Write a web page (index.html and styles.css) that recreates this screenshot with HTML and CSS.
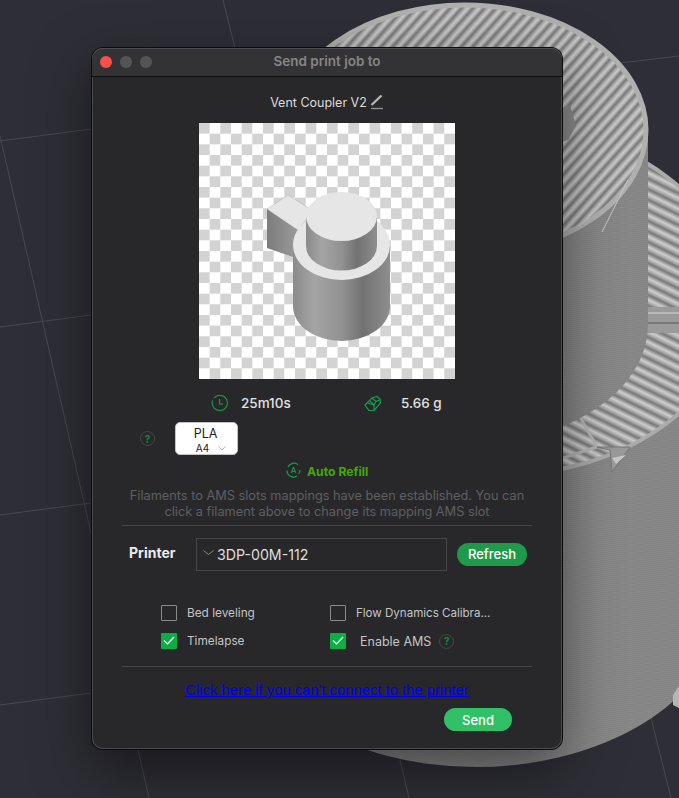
FILE: index.html
```html
<!DOCTYPE html>
<html lang="en">

<head>
  <meta charset="UTF-8" />
  <meta name="viewport" content="width=device-width, initial-scale=1.0" />
  <title>Send print job to</title>
  <link rel="stylesheet" href="styles.css">
</head>

<body>

  <!-- 3D scene behind the dialog -->
  <svg class="scene" viewBox="0 0 679 798" aria-hidden="true">
    <defs>
      <linearGradient id="ridge-a" x1="0" y1="0" x2="1" y2="0">
        <stop offset="0" stop-color="#747474" />
        <stop offset="0.25" stop-color="#a6a6a6" />
        <stop offset="0.55" stop-color="#cecece" />
        <stop offset="0.8" stop-color="#a0a0a0" />
        <stop offset="1" stop-color="#747474" />
      </linearGradient>
      <pattern id="stripes-top" width="8.5" height="8.5" patternUnits="userSpaceOnUse" patternTransform="rotate(42)">
        <rect width="8.5" height="8.5" fill="url(#ridge-a)" />
      </pattern>
      <pattern id="stripes-low" width="9.5" height="9.5" patternUnits="userSpaceOnUse" patternTransform="rotate(-64)">
        <rect width="9.5" height="9.5" fill="url(#ridge-a)" />
      </pattern>
      <pattern id="layers" width="4" height="2" patternUnits="userSpaceOnUse" patternTransform="rotate(-6)">
        <rect width="4" height="2" fill="#8a8a8a" />
        <rect width="4" height="1" fill="#838383" />
      </pattern>
    </defs>

    <g class="grid-lines">
      <line x1="0" y1="141" x2="91" y2="129" />
      <line x1="0" y1="327" x2="91" y2="315" />
      <line x1="0" y1="515" x2="91" y2="503" />
      <line x1="0" y1="705" x2="91" y2="693" />
      <line x1="0" y1="136" x2="91" y2="533" />
      <line x1="223" y1="0" x2="235" y2="48" />
      <line x1="138" y1="750" x2="149" y2="798" />
      <line x1="400" y1="760" x2="409" y2="798" />
      <line x1="649" y1="710" x2="671" y2="798" />
      <line x1="620" y1="63" x2="679" y2="56" />
    </g>

    <!-- lower body -->
    <rect x="226" y="400" width="500" height="197" fill="url(#layers)" />
    <ellipse cx="476" cy="597" rx="250" ry="170" fill="url(#layers)" />
    <!-- lower disc -->
    <ellipse cx="500" cy="300" rx="235" ry="175" fill="url(#stripes-low)" stroke="#ababab" stroke-width="4" />
    <polyline points="563,458 597,447 580,417" class="seam" />
    <polygon points="597,447 630,447 628,450 612,472 610,450" fill="#9a9a9a" stroke="#777" />
    <polygon points="612,458 626,455 616,464" fill="#c8c8c8" />
    <rect x="647" y="307" width="32" height="26" fill="#9a9a9a" />
    <rect x="647" y="312" width="32" height="2" fill="#b8b8b8" />
    <rect x="647" y="322" width="32" height="2" fill="#777" />
    <!-- upper cylinder -->
    <rect x="282" y="130" width="366" height="195" fill="url(#layers)" />
    <ellipse cx="465" cy="325" rx="183" ry="120" fill="url(#layers)" />
    <ellipse cx="465" cy="130" rx="181" ry="125" fill="url(#stripes-top)" stroke="#b0b0b0" stroke-width="5" />
    <polygon points="562,108 570,105 576,126 568,140 562,142" fill="#8d8d8d" />
    <polyline points="602,232 628,180" class="glint" />
    <polyline points="578,226 590,218" class="glint" />
    <polygon points="673,695 679,686 679,708 673,705" fill="#b5b5b5" />
  </svg>

  <!-- Dialog window -->
  <section class="window">
    <header class="titlebar">
      <div class="lights">
        <span class="light light-close"></span>
        <span class="light"></span>
        <span class="light"></span>
      </div>
      <h1>Send print job to</h1>
    </header>

    <div class="job-name">
      <span>Vent Coupler V2</span>
      <svg class="pencil" width="14" height="16" viewBox="0 0 14 16">
        <path d="M1.5 11 L11.5 1.5" stroke="#b5b5b5" stroke-width="2.4" fill="none" />
        <path d="M1 14.5 H13" stroke="#8d8d8d" stroke-width="1.4" fill="none" />
      </svg>
    </div>

    <div class="thumb">
      <svg class="model" width="256" height="256" viewBox="199 123 256 256">
        <defs>
          <linearGradient id="metal" x1="0" y1="0" x2="1" y2="0">
            <stop offset="0" stop-color="#8b8b8b" />
            <stop offset="0.22" stop-color="#a4a4a4" />
            <stop offset="0.5" stop-color="#929292" />
            <stop offset="0.72" stop-color="#727272" />
            <stop offset="1" stop-color="#8e8e8e" />
          </linearGradient>
          <linearGradient id="tab-side" x1="0" y1="0" x2="1" y2="0">
            <stop offset="0" stop-color="#7c7c7c" />
            <stop offset="1" stop-color="#9b9b9b" />
          </linearGradient>
        </defs>
        <polygon points="267,209 298,230 296,258 267,248" fill="url(#tab-side)" />
        <polygon points="267,209 288,195 310,209 306,220 298,230" fill="#e6e6e6" stroke="#a5a5a5" stroke-width="0.4" />
        <path d="M293 245 V306 A48.5 35 0 0 0 390 306 V245 Z" fill="url(#metal)" />
        <ellipse cx="341.5" cy="245" rx="48.5" ry="35" fill="#e6e6e6" />
        <path d="M306 216 V246 A35.5 24.5 0 0 0 377 246 V216 Z" fill="url(#metal)" />
        <ellipse cx="341.5" cy="216.5" rx="35.5" ry="24.5" fill="#e6e6e6" />
      </svg>
    </div>

    <div class="stats">
      <div class="stat stat-time">
        <svg width="17" height="17" viewBox="0 0 17 17" fill="none" stroke="#12a04a" stroke-width="1.1">
          <path d="M3 3 A7.6 7.6 0 1 1 1.6 5.4" />
          <path d="M8.5 4 V9 H12" />
        </svg>
        <span>25m10s</span>
      </div>
      <div class="stat stat-weight">
        <svg width="18" height="17" viewBox="0 0 18 17" fill="none" stroke="#12a04a" stroke-width="1.2">
          <path d="M1 10 L8 3 L13 1.5 L16 4 L16.5 8 L10 15.5 L5 15.5 Z" />
          <path d="M8 3 L12 6.5 L16.5 4.5 M12 6.5 L10 10 L4 8 M10 10 L10 15.5 M6 6 L10 10" />
        </svg>
        <span>5.66 g</span>
      </div>
    </div>

    <div class="filament">
      <span class="help">?</span>
      <div class="chip">
        <span class="chip-name">PLA</span>
        <div class="chip-slot">
          <span>A4</span>
          <svg width="8" height="5" viewBox="0 0 8 5" fill="none" stroke="#b8b8b8">
            <path d="M0.5 0.5 L4 4 L7.5 0.5" />
          </svg>
        </div>
      </div>
    </div>

    <div class="refill">
      <svg width="15" height="16" viewBox="0 0 15 16" fill="none" stroke="#12a04a" stroke-width="1.2">
        <path d="M2 5 A6.5 6.5 0 0 1 12 2.6 M1 8.5 A6.5 6.5 0 0 0 11 14 M14 8 A6.5 6.5 0 0 1 12.6 12" />
        <text x="7.5" y="11" text-anchor="middle" class="refill-a">A</text>
      </svg>
      <span>Auto Refill</span>
    </div>

    <p class="hint">Filaments to AMS slots mappings have been established. You can<br>click a filament above to change its mapping AMS slot</p>

    <div class="divider divider-top"></div>

    <div class="printer">
      <label>Printer</label>
      <div class="select">
        <svg width="11" height="6" viewBox="0 0 11 6" fill="none" stroke="#8a8a8a">
          <path d="M0.5 0.5 L5.5 4.5 L10.5 0.5" />
        </svg>
        <span>3DP-00M-112</span>
      </div>
      <button class="btn btn-refresh">Refresh</button>
    </div>

    <div class="options">
      <div class="option">
        <span class="check"></span>
        <span class="option-label">Bed leveling</span>
      </div>
      <div class="option">
        <span class="check"></span>
        <span class="option-label option-flow">Flow Dynamics Calibra...</span>
      </div>
      <div class="option">
        <span class="check checked">
          <svg width="12" height="10" viewBox="0 0 12 10" fill="none" stroke="#fff" stroke-width="1.2"><path d="M1 4.5 L4.5 8 L11 1" /></svg>
        </span>
        <span class="option-label">Timelapse</span>
      </div>
      <div class="option">
        <span class="check checked">
          <svg width="12" height="10" viewBox="0 0 12 10" fill="none" stroke="#fff" stroke-width="1.2"><path d="M1 4.5 L4.5 8 L11 1" /></svg>
        </span>
        <span class="option-label option-ams">Enable AMS</span>
        <span class="help">?</span>
      </div>
    </div>

    <div class="divider divider-bottom"></div>

    <a class="connect-link" href="#">Click here if you can't connect to the printer</a>

    <div class="actions">
      <button class="btn btn-send">Send</button>
    </div>
  </section>

</body>

</html>
```

FILE: styles.css
```css
* {
  box-sizing: border-box;
}

body {
  margin: 0;
  width: 679px;
  height: 798px;
  overflow: hidden;
  position: relative;
  background-color: #2e2e36;
  font-family: Inter, 'Noto Sans', sans-serif;
  color: #ddd;
}

.scene {
  position: absolute;
  left: 0;
  top: 0;
  width: 679px;
  height: 798px;
}

.grid-lines line {
  stroke: #484850;
  stroke-width: 1;
}

.glint {
  stroke: #c9c9c9;
  stroke-width: 1;
  fill: none;
}

.seam {
  stroke: #b4b4b4;
  stroke-width: 3;
  fill: none;
}

/* Dialog window */
.window {
  position: absolute;
  left: 92px;
  top: 48px;
  width: 470px;
  height: 701px;
  background-color: #28282b;
  border-radius: 11px;
  box-shadow: 0 0 0 1px #0c0c0c, inset 0 0 0 1px #4a4a4c, 0 20px 55px rgba(0, 0, 0, 0.5);
}

.titlebar {
  height: 29px;
  display: flex;
  align-items: center;
  justify-content: center;
  position: relative;
  background-color: #333335;
  border-bottom: 1px solid #0e0e0e;
  border-radius: 11px 11px 0 0;
  box-shadow: inset 0 1px 0 #4e4e50;
}

.titlebar h1 {
  margin: 0 0 2px;
  font-size: 13.5px;
  font-weight: 600;
  color: #858585;
}

.lights {
  position: absolute;
  left: 8px;
  top: 8px;
  display: flex;
  gap: 8px;
}

.light {
  width: 12px;
  height: 12px;
  border-radius: 50%;
  background-color: #545456;
}

.light-close {
  background-color: #fd4e4a;
}

.job-name {
  height: 20px;
  margin-top: 15px;
  display: flex;
  align-items: center;
  justify-content: center;
  gap: 3px;
  font-size: 12.5px;
  color: #dcdcdc;
}

.pencil {
  margin-top: -1px;
}

.thumb {
  width: 256px;
  height: 256px;
  margin: 11px auto 0;
  background-color: #fff;
  background-image: conic-gradient(#fff 25%, #d3d3d3 0 50%, #fff 0 75%, #d3d3d3 0);
  background-size: 21.34px 21.34px;
}

.model {
  display: block;
}

.stats {
  height: 20px;
  margin-top: 14px;
  display: flex;
  align-items: center;
  font-size: 13.5px;
  font-weight: 500;
  color: #e2e2e2;
}

.stat {
  display: flex;
  align-items: center;
}

.stat-time {
  margin-left: 119px;
  width: 153px;
  gap: 13px;
}

.stat-weight {
  gap: 19px;
}

.filament {
  height: 33px;
  margin-top: 9px;
  padding-left: 48px;
  display: flex;
  align-items: center;
  gap: 20px;
}

.help {
  width: 15px;
  height: 15px;
  border: 1px solid #47474a;
  border-radius: 50%;
  display: flex;
  align-items: center;
  justify-content: center;
  font-size: 10px;
  font-weight: 700;
  color: #0f8a3c;
}

.chip {
  width: 63px;
  height: 33px;
  background-color: #fff;
  border: 1px solid #c4c4c4;
  border-radius: 5px;
  color: #222;
  display: flex;
  flex-direction: column;
  align-items: center;
  font-size: 12.5px;
  padding-top: 3px;
}

.chip-name {
  line-height: 15px;
  margin-left: -2px;
}

.chip-slot {
  display: flex;
  align-items: center;
  gap: 9px;
  font-size: 10px;
  line-height: 12px;
  margin: 1px 0 0 9px;
}

.refill {
  height: 16px;
  margin-top: 7px;
  padding-left: 194px;
  display: flex;
  align-items: center;
  gap: 6px;
  font-size: 12.2px;
  font-weight: 700;
  color: #42a805;
}

.refill span {
  margin-top: 2px;
}

.refill-a {
  font-size: 8px;
  font-weight: 500;
  fill: #12a04a;
  stroke: none;
}

.hint {
  margin: 10px 0 0;
  text-align: center;
  font-size: 12.75px;
  line-height: 16px;
  color: #5f5f61;
}

.divider {
  height: 1px;
  margin-left: 30px;
  width: 410px;
  background-color: #47474a;
}

.divider-top {
  margin-top: 5px;
}

.divider-bottom {
  margin-top: 17px;
}

.printer {
  height: 33px;
  margin-top: 12px;
  padding-left: 37px;
  display: flex;
  align-items: center;
}

.printer label {
  width: 67px;
  margin-top: -4px;
  font-size: 14px;
  font-weight: 700;
  color: #ececec;
}

.select {
  width: 251px;
  height: 33px;
  border: 1px solid #47474a;
  padding-left: 6px;
  display: flex;
  align-items: center;
  gap: 3px;
  font-size: 14.2px;
  color: #dedede;
}

.select svg {
  margin-top: -4px;
}

.btn {
  border: none;
  border-radius: 12px;
  color: #fff;
  font-family: inherit;
  font-size: 13px;
  font-weight: 500;
  height: 23px;
  padding: 0;
}

.btn-refresh {
  width: 70px;
  margin: -1px 0 0 10px;
  background-color: #1f9a4b;
}

.btn-send {
  width: 68px;
  background-color: #30c167;
}

.options {
  margin-top: 34px;
  padding-left: 69px;
  display: grid;
  grid-template-columns: 169px 200px;
  row-gap: 12px;
}

.option {
  height: 16px;
  display: flex;
  align-items: center;
  font-size: 11.8px;
  color: #c4c4c4;
}

.check {
  width: 16px;
  height: 16px;
  margin-right: 10px;
  border: 1px solid #8a8a8a;
  border-radius: 1px;
  display: flex;
  align-items: center;
  justify-content: center;
}

.checked {
  border: none;
  background-color: #0cae46;
}

.option-flow {
  font-size: 11.55px;
}

.option-ams {
  margin-left: 4px;
  margin-right: 8px;
  font-size: 12.5px;
}

.connect-link {
  display: block;
  height: 16px;
  margin-top: 15px;
  text-align: center;
  font-family: 'Liberation Sans', Arial, sans-serif;
  font-size: 14.8px;
  line-height: 16px;
  color: #0000ee;
}

.actions {
  margin-top: 10px;
  padding-left: 352px;
}
```
